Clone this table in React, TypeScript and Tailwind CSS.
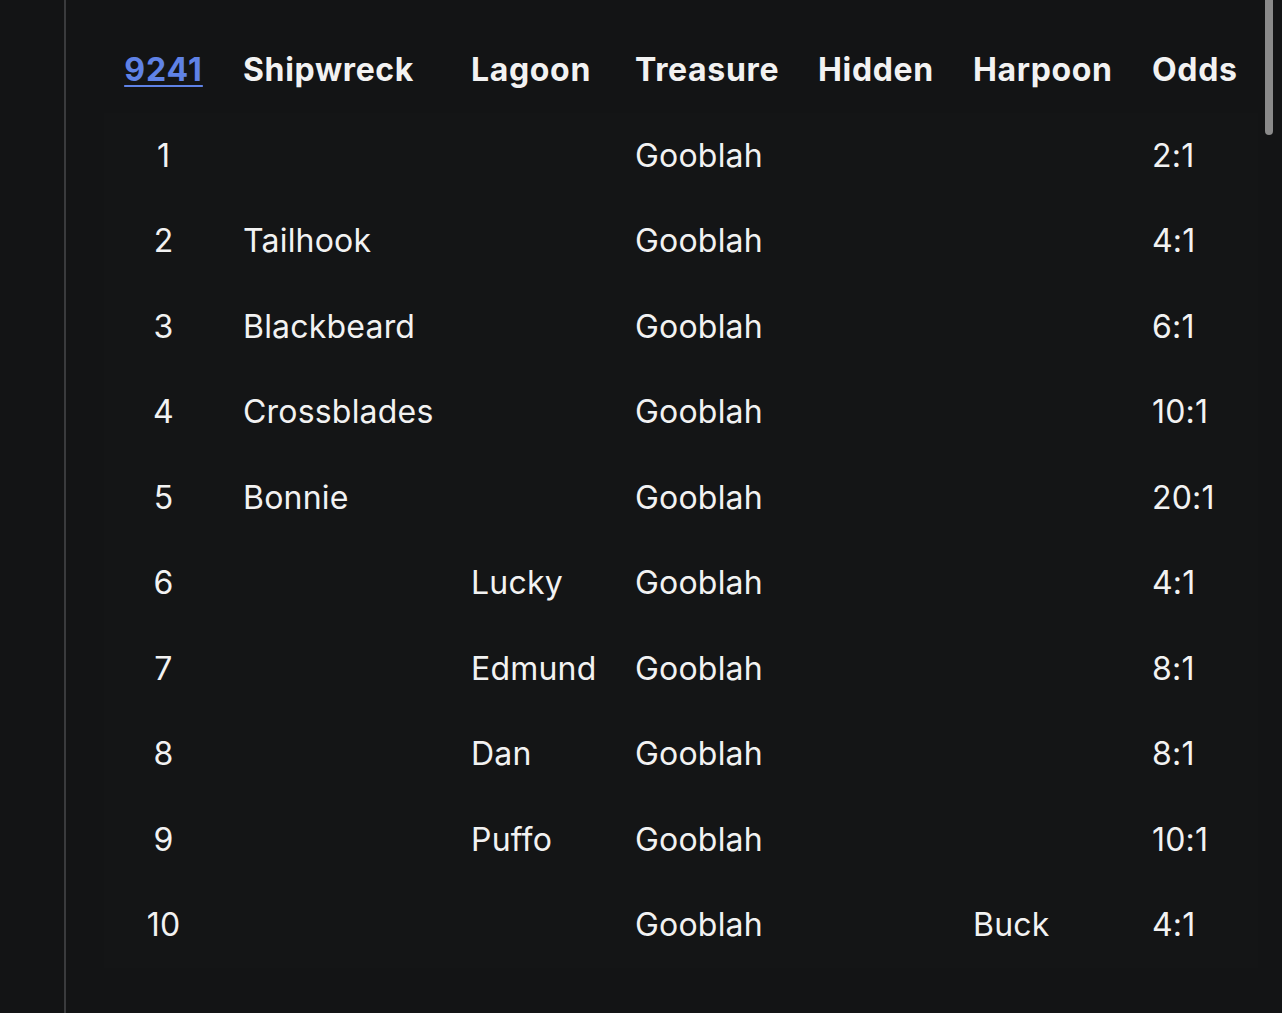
import React from "react";

const rows: [string, string, string, string, string, string, string][] = [
  ["1", "", "", "Gooblah", "", "", "2:1"],
  ["2", "Tailhook", "", "Gooblah", "", "", "4:1"],
  ["3", "Blackbeard", "", "Gooblah", "", "", "6:1"],
  ["4", "Crossblades", "", "Gooblah", "", "", "10:1"],
  ["5", "Bonnie", "", "Gooblah", "", "", "20:1"],
  ["6", "", "Lucky", "Gooblah", "", "", "4:1"],
  ["7", "", "Edmund", "Gooblah", "", "", "8:1"],
  ["8", "", "Dan", "Gooblah", "", "", "8:1"],
  ["9", "", "Puffo", "Gooblah", "", "", "10:1"],
  ["10", "", "", "Gooblah", "", "Buck", "4:1"],
];

const headers = ["Shipwreck", "Lagoon", "Treasure", "Hidden", "Harpoon", "Odds"];

export default function App() {
  return (
    <div
      className="relative flex h-[1013px] w-[1282px] overflow-hidden bg-[#131415] text-[#f2f2f2]"
      style={{ fontFamily: "Inter, 'Noto Sans', sans-serif" }}
    >
      <div className="w-[64px] shrink-0 bg-[#131415]" />
      <div className="w-[2px] shrink-0 bg-[#3a3b3d]" />
      <div className="flex-1 pl-[38px] pt-[27px]">
        <table className="w-[1154px] table-fixed border-collapse text-[32px] tracking-[0.2px]">
          <colgroup>
            <col className="w-[119px]" />
            <col className="w-[228px]" />
            <col className="w-[164px]" />
            <col className="w-[183px]" />
            <col className="w-[155px]" />
            <col className="w-[179px]" />
            <col className="w-[126px]" />
          </colgroup>
          <thead>
            <tr className="h-[86px]">
              <th className="px-0 text-center font-bold tracking-[1px]">
                <a className="text-[#5f82e6] underline decoration-2 underline-offset-4" href="#">
                  9241
                </a>
              </th>
              {headers.map((h) => (
                <th key={h} className="whitespace-nowrap px-5 text-left font-bold tracking-[0.65px]">
                  {h}
                </th>
              ))}
            </tr>
          </thead>
          <tbody>
            {rows.map((r) => (
              <tr key={r[0]} className="h-[85.5px] bg-[#141516]">
                <td className="px-0 text-center">{r[0]}</td>
                {r.slice(1).map((c, i) => (
                  <td key={i} className="whitespace-nowrap px-5 text-left">
                    {c}
                  </td>
                ))}
              </tr>
            ))}
          </tbody>
        </table>
      </div>
      <div className="absolute right-[9px] top-0 h-[135px] w-[8px] rounded-b-full bg-[#8a8a8a]" />
    </div>
  );
}
